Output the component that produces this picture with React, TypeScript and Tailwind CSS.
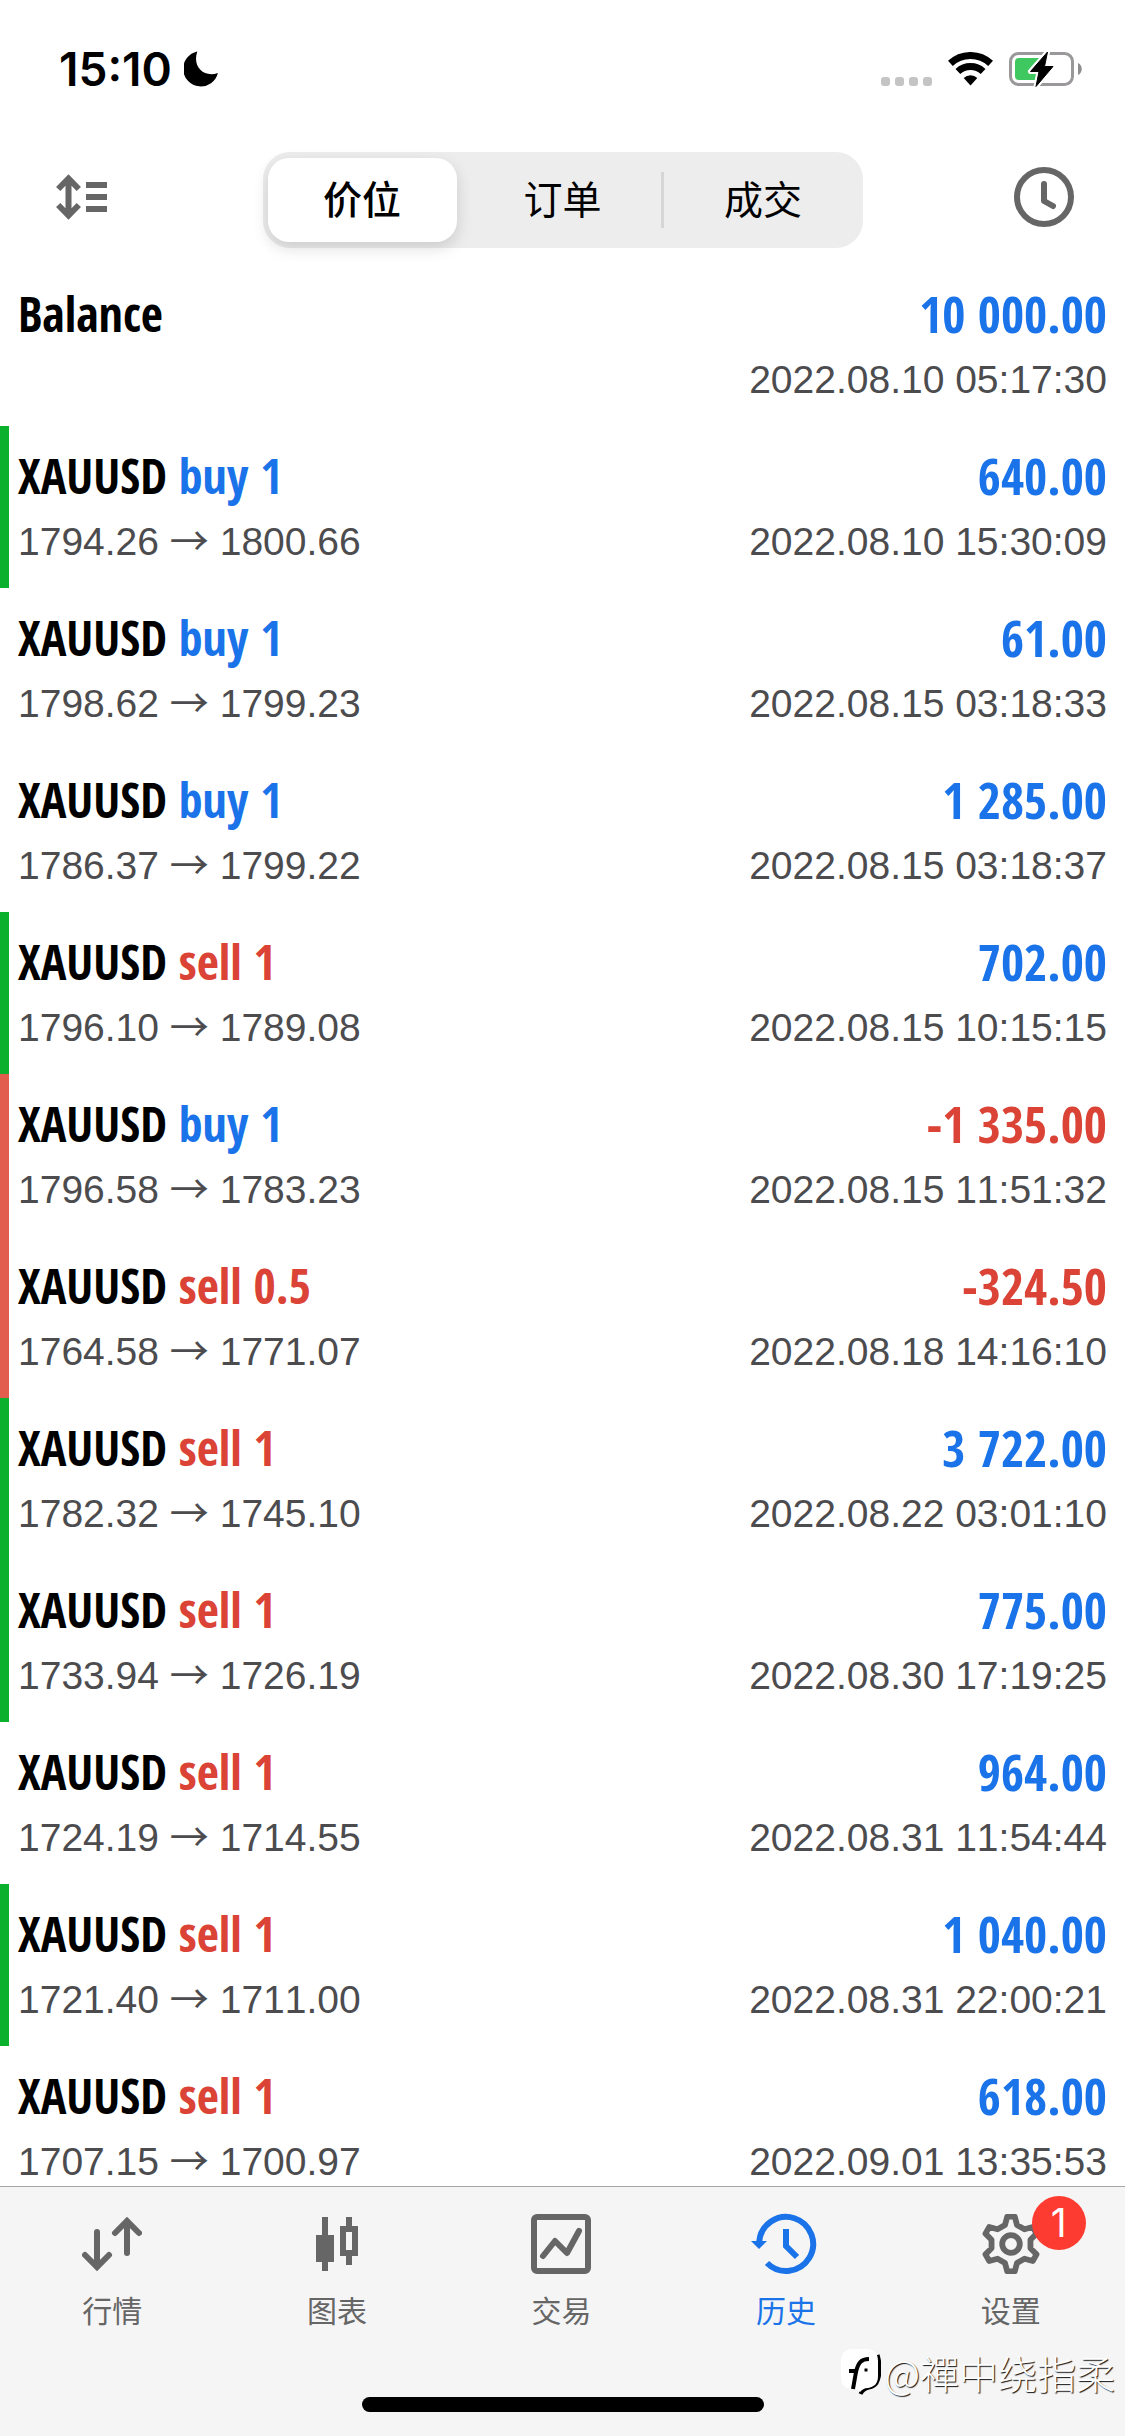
import React, { useState } from 'react';

import clsx from 'clsx';

type Side = 'buy' | 'sell';
type CloseMark = 'tp' | 'sl';

interface Position {
    symbol: string;
    side: Side;
    volume: string;
    open: string;
    close: string;
    profit: string;
    time: string;
    mark?: CloseMark;
}

const positions: Position[] = [
    { symbol: 'XAUUSD', side: 'buy', volume: '1', open: '1794.26', close: '1800.66', profit: '640.00', time: '2022.08.10 15:30:09', mark: 'tp' },
    { symbol: 'XAUUSD', side: 'buy', volume: '1', open: '1798.62', close: '1799.23', profit: '61.00', time: '2022.08.15 03:18:33' },
    { symbol: 'XAUUSD', side: 'buy', volume: '1', open: '1786.37', close: '1799.22', profit: '1 285.00', time: '2022.08.15 03:18:37' },
    { symbol: 'XAUUSD', side: 'sell', volume: '1', open: '1796.10', close: '1789.08', profit: '702.00', time: '2022.08.15 10:15:15', mark: 'tp' },
    { symbol: 'XAUUSD', side: 'buy', volume: '1', open: '1796.58', close: '1783.23', profit: '-1 335.00', time: '2022.08.15 11:51:32', mark: 'sl' },
    { symbol: 'XAUUSD', side: 'sell', volume: '0.5', open: '1764.58', close: '1771.07', profit: '-324.50', time: '2022.08.18 14:16:10', mark: 'sl' },
    { symbol: 'XAUUSD', side: 'sell', volume: '1', open: '1782.32', close: '1745.10', profit: '3 722.00', time: '2022.08.22 03:01:10', mark: 'tp' },
    { symbol: 'XAUUSD', side: 'sell', volume: '1', open: '1733.94', close: '1726.19', profit: '775.00', time: '2022.08.30 17:19:25', mark: 'tp' },
    { symbol: 'XAUUSD', side: 'sell', volume: '1', open: '1724.19', close: '1714.55', profit: '964.00', time: '2022.08.31 11:54:44' },
    { symbol: 'XAUUSD', side: 'sell', volume: '1', open: '1721.40', close: '1711.00', profit: '1 040.00', time: '2022.08.31 22:00:21', mark: 'tp' },
    { symbol: 'XAUUSD', side: 'sell', volume: '1', open: '1707.15', close: '1700.97', profit: '618.00', time: '2022.09.01 13:35:53' },
];

const segments = ['价位', '订单', '成交'];

// gear outline: six teeth around the centre
const toothPoints = [
    [-6, -19],
    [-3.8, -27.3],
    [3.8, -27.3],
    [6, -19],
];
const gearPoints = [0, 60, 120, 180, 240, 300]
    .flatMap((deg) => {
        const a = (deg * Math.PI) / 180;
        return toothPoints.map(([x, y]) => `${30 + x * Math.cos(a) - y * Math.sin(a)},${30 + x * Math.sin(a) + y * Math.cos(a)}`);
    })
    .join(' ');

const QuotesIcon = () => (
    <svg viewBox="0 0 60 60" className="size-[60px]" fill="none" stroke="currentColor" strokeWidth="6" strokeLinecap="round">
        <path d="M15 18v35M3 41l12 12 12-12M45 39V7M33 19L45 7l12 12" />
    </svg>
);

const ChartsIcon = () => (
    <svg viewBox="0 0 60 60" className="size-[60px]" fill="currentColor">
        <path d="M15 3h6v18h6v27h-6v9h-6v-9H9V21h6z" />
        <path fillRule="evenodd" d="M39 3h6v9h6v30h-6v9h-6v-9h-6V12h6zM39 18v18h6V18z" />
    </svg>
);

const TradeIcon = () => (
    <svg viewBox="0 0 60 60" className="size-[60px]" fill="none" stroke="currentColor" strokeWidth="6">
        <rect x="3" y="3" width="54" height="54" rx="3" />
        <path d="M12 42l12-15 12 12 12-22" strokeLinecap="round" strokeLinejoin="round" />
    </svg>
);

const HistoryIcon = () => (
    <svg viewBox="0 0 60 60" className="size-[60px] overflow-visible" fill="none" stroke="currentColor" strokeWidth="6">
        <path d="M11 49A27 27 0 1 0 3.2 28M30 15v17l11 11" />
        <path d="M-5 27h16l-8 8z" fill="currentColor" stroke="none" />
    </svg>
);

const SettingsIcon = () => (
    <svg viewBox="0 0 60 60" className="size-[60px]" fill="none" stroke="currentColor" strokeWidth="5.8" strokeLinejoin="round">
        <polygon points={gearPoints} />
        <circle cx="30" cy="30" r="8.8" />
    </svg>
);

const tabs = [
    { label: '行情', icon: QuotesIcon },
    { label: '图表', icon: ChartsIcon },
    { label: '交易', icon: TradeIcon },
    { label: '历史', icon: HistoryIcon },
    { label: '设置', icon: SettingsIcon, badge: 1 },
];

const StatusBar = () => (
    <div className="flex h-[138px] shrink-0 items-center justify-between pl-[59px] pr-[43px]">
        <div className="flex items-center gap-3">
            <span className="font-['Inter',sans-serif] text-[46px] font-semibold leading-[54px]">15:10</span>
            <svg viewBox="0 0 35 36" className="h-[36px] w-[35px]">
                <path d="M13.3.6A17.6 17.6 0 1 0 33.9 22C20 27 8 16 13.3.6z" />
            </svg>
        </div>
        <div className="flex items-center gap-4">
            <div className="flex gap-[5px] pt-6">
                {[0, 1, 2, 3].map((i) => (
                    <span key={i} className="size-[9px] rounded-[3px] bg-[#c4c4c4]" />
                ))}
            </div>
            <svg viewBox="0 0 45 34" className="h-[34px] w-[45px]">
                <path d="M2.4 11.4a29.5 29.5 0 0 1 40.2 0M9.9 19.5a18.5 18.5 0 0 1 25.2 0" fill="none" stroke="#000" strokeWidth="7" />
                <path d="M22.5 33.5l-6.8-7.6a10 10 0 0 1 13.6 0z" />
            </svg>
            <svg viewBox="0 0 73 36" className="h-[36px] w-[73px]">
                <rect x="1.5" y="2.5" width="62" height="31" rx="8" fill="#fff" stroke="#9b989b" strokeWidth="3" />
                <path d="M69 12c5 2 5 10 0 12z" fill="#8e8e8e" />
                <rect x="6" y="7" width="28" height="22" rx="4" fill="#3fc85f" />
                <path d="M38.5 1L21.5 20.5H30L27 35.5 44 15.5H35.5z" stroke="#fff" strokeWidth="5" strokeLinejoin="round" />
                <path d="M38.5 1L21.5 20.5H30L27 35.5 44 15.5H35.5z" stroke="#000" strokeWidth="1" strokeLinejoin="round" />
            </svg>
        </div>
    </div>
);

const HistoryRow = ({ item }: { item: Position }) => (
    <li
        className={clsx(
            'flex h-[162px] justify-between border-l-9 pl-[9px] pr-[18px] pt-5',
            item.mark === 'tp' && 'border-[#0bb02c]',
            item.mark === 'sl' && 'border-[#e25d4d]',
            !item.mark && 'border-transparent'
        )}
    >
        <div className="flex flex-col gap-3">
            <h2 className="font-['Open_Sans_Condensed','Roboto_Condensed',sans-serif] text-[48px] font-bold leading-[60px]">
                {item.symbol}{' '}
                <span className={item.side === 'buy' ? 'text-[#1a73e8]' : 'text-[#da4336]'}>
                    {item.side} {item.volume}
                </span>
            </h2>
            <p className="text-[39px] leading-[48px] text-[#4c4c4f]">
                {item.open} <span className="font-['Noto_Sans_CJK_SC',sans-serif] leading-none">→</span> {item.close}
            </p>
        </div>
        <div className="flex flex-col gap-3 text-right">
            <span
                className={clsx(
                    "font-['Open_Sans_Condensed','Roboto_Condensed',sans-serif] text-[50px] font-bold leading-[60px]",
                    item.profit.startsWith('-') ? 'text-[#da4336]' : 'text-[#1a73e8]'
                )}
            >
                {item.profit}
            </span>
            <time className="text-[39px] leading-[48px] text-[#4c4c4f]">{item.time}</time>
        </div>
    </li>
);

const App: React.FC = () => {
    const [segment, setSegment] = useState('价位');
    const [activeTab, setActiveTab] = useState('历史');

    return (
        <div className="flex h-screen flex-col bg-white font-['Liberation_Sans','Noto_Sans_CJK_SC',sans-serif] text-black">
            <StatusBar />

            {/* ------------------ Header ------------------ */}
            <header className="flex h-[126px] shrink-0 items-center justify-between px-[51px] pb-0.5">
                <button aria-label="Sort" className="flex w-[60px] justify-center pb-1.5 text-[#666]">
                    <svg viewBox="0 0 51 46" className="h-[46px] w-[51px]" fill="none" stroke="currentColor" strokeWidth="6">
                        <path d="M12.5 4v38M2.200 15L12.5 4.5 22.8 15M2.200 31l10.3 10.5L22.8 31" />
                        <path d="M30 11h21M30 23h21M30 35h21" />
                    </svg>
                </button>
                <div role="tablist" className="grid h-24 w-[600px] grid-cols-3 rounded-[27px] bg-[#ededed] pl-[3px]">
                    {segments.map((name, i) => (
                        <button
                            key={name}
                            role="tab"
                            aria-selected={segment === name}
                            onClick={() => setSegment(name)}
                            className={clsx(
                                'pt-0.5 text-[39px] leading-[48px]',
                                segment === name
                                    ? 'my-1.5 ml-0.5 mr-2 rounded-[21px] bg-white font-medium shadow-[0_6px_16px_rgba(0,0,0,0.14)]'
                                    : 'my-5',
                                segment !== name && i === 1 && 'border-r-3 border-[#d6d6d6]'
                            )}
                        >
                            {name}
                        </button>
                    ))}
                </div>
                <button aria-label="Period" className="pb-1.5 text-[#666]">
                    <svg viewBox="0 0 60 60" className="size-[60px]" fill="none" stroke="currentColor" strokeWidth="6" strokeLinecap="round" strokeLinejoin="round">
                        <circle cx="30" cy="30" r="27" />
                        <path d="M30 17v17l9 5" />
                    </svg>
                </button>
            </header>

            {/* ------------------ History ------------------ */}
            <main className="min-h-0 flex-1 overflow-y-auto [font-kerning:none] [scrollbar-width:none]">
                <ul>
                    <li className="flex h-[162px] justify-between px-[18px] pt-5">
                        <h2 className="font-['Open_Sans_Condensed','Roboto_Condensed',sans-serif] text-[48px] font-bold leading-[60px]">Balance</h2>
                        <div className="flex flex-col gap-3 text-right">
                            <span className="font-['Open_Sans_Condensed','Roboto_Condensed',sans-serif] text-[50px] font-bold leading-[60px] text-[#1a73e8]">
                                10 000.00
                            </span>
                            <time className="text-[39px] leading-[48px] text-[#4c4c4f]">2022.08.10 05:17:30</time>
                        </div>
                    </li>
                    {positions.map((item) => (
                        <HistoryRow key={item.time} item={item} />
                    ))}
                </ul>
            </main>

            {/* ------------------ Tab bar ------------------ */}
            <footer className="relative flex h-[250px] shrink-0 flex-col items-center justify-between border-t border-[#a6a6a8] bg-[#f5f5f5] pb-6 pt-[27px]">
                <nav className="grid w-full grid-cols-5 pr-0.5">
                    {tabs.map(({ label, icon: Icon, badge }) => (
                        <button
                            key={label}
                            onClick={() => setActiveTab(label)}
                            className={clsx('flex flex-col items-center gap-5', activeTab === label ? 'text-[#1a73e8]' : 'text-[#666]')}
                        >
                            <span className="relative">
                                <Icon />
                                {badge && (
                                    <span className="absolute -top-[18px] left-[51px] flex size-[54px] items-center justify-center rounded-full bg-[#fe3b30] font-['Inter',sans-serif] text-[39px] leading-[48px] text-white">
                                        {badge}
                                    </span>
                                )}
                            </span>
                            <span className="text-[30px] leading-[36px]">{label}</span>
                        </button>
                    ))}
                </nav>
                <div className="h-[15px] w-[402px] rounded-full bg-black" />

                {/* author mark over the bar */}
                <div className="absolute bottom-10 right-[10px] flex items-center gap-1">
                    <svg viewBox="0 0 40 46" className="h-[46px] w-[40px]" fill="none" stroke="#000">
                        <path d="M36.5 6c3 9 3 21-1 28-5 7-12 2-16 11" strokeWidth="4" />
                        <path d="M12 0h14c8 0 11 5 11 12v15c0 8-4 11-10 12-4 0-6 2-8 4-2-3-5-3-8-3C4 40 0 36 0 28V12C0 4 4 0 12 0z" fill="#fff" stroke="none" />
                        <path d="M12 40l3-17c2-9 5-13 13-13M8 22h9" strokeWidth="4" />
                        <path d="M23.5 21h3" strokeWidth="3" />
                    </svg>
                    <span className="font-['Noto_Sans_CJK_SC',sans-serif] text-[39px] font-light leading-[48px] text-white [text-shadow:1px_1px_1px_#111]">
                        @禪中绕指柔
                    </span>
                </div>
            </footer>
        </div>
    );
};

export default App;
